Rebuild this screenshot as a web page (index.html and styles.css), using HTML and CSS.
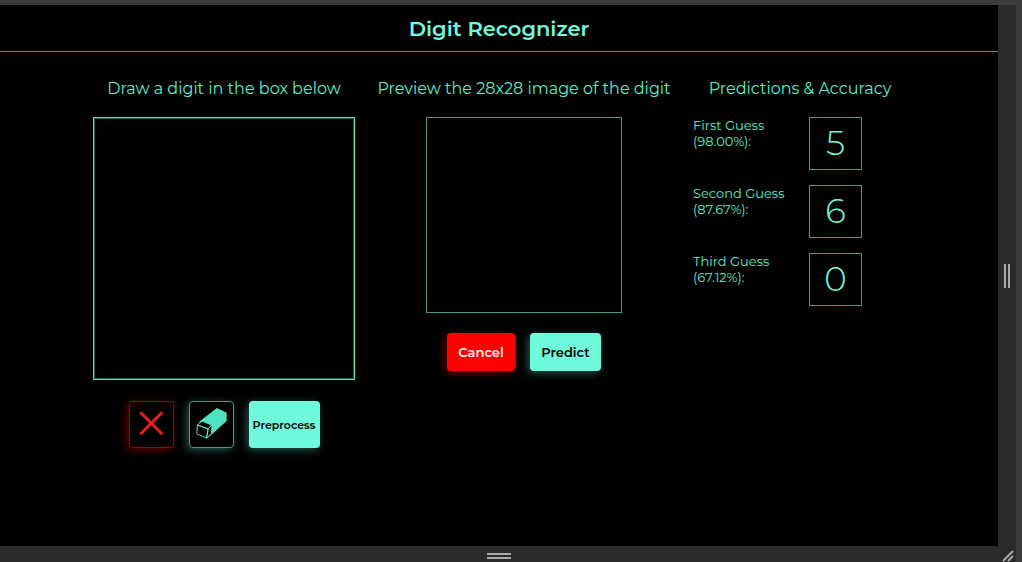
FILE: index.html
```html
<!DOCTYPE html>
<html lang="en">
<head>
<meta charset="utf-8">
<meta name="viewport" content="width=device-width, initial-scale=1">
<title>Digit Recognizer</title>
<link rel="stylesheet" href="styles.css">
</head>
<body>
<div class="frame">
  <div class="page">
    <header class="header"><h1 class="title">Digit Recognizer</h1></header>
    <main class="columns">
      <section class="column">
        <h2 class="heading">Draw a digit in the box below</h2>
        <canvas class="draw-box" width="260" height="261" aria-label="Drawing area"></canvas>
        <div class="actions draw-actions">
          <button class="button icon-button clear" type="button" aria-label="Clear">
            <svg class="icon" viewBox="0 0 44 46" aria-hidden="true"><path d="M10.500 10.500 33 33M33 10.500 10.500 33" fill="none" stroke="#e81d1d" stroke-width="3"/></svg>
          </button>
          <button class="button icon-button erase" type="button" aria-label="Erase">
            <svg class="icon" viewBox="0 0 44 46" aria-hidden="true">
              <path d="M9 20.500 27.500 6 37.500 11V19.500L19 36 22 24Z" fill="#50e3c2"/>
              <path d="M7.500 23.500 12.500 19.500 22 23.500 18.500 27.500ZM7.500 23.500 7 32.500 17 37 18.500 27.500ZM22.500 23.500 22 32.500 17 37 18.500 27.500Z" fill="#000" stroke="#50e3c2" stroke-width="1" stroke-linejoin="round"/>
            </svg>
          </button>
          <button class="button preprocess" type="button">Preprocess</button>
        </div>
      </section>
      <section class="column">
        <h2 class="heading">Preview the 28x28 image of the digit</h2>
        <canvas class="preview-box" width="194" height="194" aria-label="Digit preview"></canvas>
        <div class="actions preview-actions">
          <button class="button cancel" type="button">Cancel</button>
          <button class="button predict" type="button">Predict</button>
        </div>
      </section>
      <section class="column">
        <h2 class="heading">Predictions &amp; Accuracy</h2>
        <div class="guesses">
          <div class="guess"><p class="label">First Guess<br>(98.00%):</p><output class="digit">5</output></div>
          <div class="guess"><p class="label">Second Guess<br>(87.67%):</p><output class="digit">6</output></div>
          <div class="guess"><p class="label">Third Guess<br>(67.12%):</p><output class="digit">0</output></div>
        </div>
      </section>
    </main>
  </div>
  <div class="handle side"><svg width="8" height="24" aria-hidden="true"><path d="M2 0V24M6 0V24" stroke="#aaa" stroke-width="2"/></svg></div>
  <div class="handle bottom"><svg width="24" height="6" aria-hidden="true"><path d="M0 1H24M0 5H24" stroke="#aaa" stroke-width="2"/></svg></div>
  <div class="handle corner"><svg width="12" height="12" aria-hidden="true"><path d="M1 11 11 1M6 11 11 6" stroke="#aaa" stroke-width="2"/></svg></div>
</div>
</body>
</html>
```
FILE: styles.css
```css
* { box-sizing: border-box; }
body {
  margin: 0;
  background: #3c3c3c;
  color: #5cebcb;
  font-family: Montserrat, Inter, sans-serif;
}
.frame {
  min-height: 100vh;
  padding: 5px 6px 0 0;
  display: grid;
  grid-template-columns: minmax(0, 1fr) 18px;
  grid-template-rows: 1fr 16px;
}
.page { background: #000; }
.header {
  padding: 10px 0 9px;
  border-bottom: 1px solid #439b84;
  text-align: center;
}
.title {
  margin: 0;
  color: #70fadc;
  font-size: 21px;
  line-height: 27px;
  font-weight: 600;
}
.columns {
  display: grid;
  grid-template-columns: 262px 286px 214px;
  gap: 26px;
  justify-content: center;
  padding: 26px 0 0 2px;
}
.column {
  display: flex;
  flex-direction: column;
  align-items: center;
}
.heading {
  margin: 0 0 17px;
  font-size: 16px;
  line-height: 22px;
  font-weight: 400;
  white-space: nowrap;
}
.draw-box {
  display: block;
  border: 1px solid #64dcc2;
  box-shadow: inset 0 0 0 1px #24594d;
}
.preview-box {
  display: block;
  border: 1px solid #439b84;
}
.actions {
  display: flex;
  justify-content: center;
}
.draw-actions { gap: 15px; margin-top: 21px; }
.preview-actions { gap: 15px; margin-top: 20px; }
.button {
  height: 38px;
  padding: 0;
  border: 0;
  border-radius: 4px;
  font-family: inherit;
  font-size: 13px;
  font-weight: 600;
  box-shadow: -2px 2px 8px rgba(112, 250, 220, 0.35);
  background: #70fadc;
  color: #000;
}
.icon-button {
  width: 45px;
  height: 47px;
  background: #000;
}
.icon { display: block; width: 100%; height: 100%; }
.clear {
  border: 1px solid #a00000;
  box-shadow: -2px 2px 8px rgba(255, 0, 0, 0.4);
}
.erase { border: 1px solid #439b84; }
.preprocess { width: 71px; height: 47px; font-size: 11px; }
.cancel {
  width: 68px;
  background: #f00;
  color: #fff;
  box-shadow: -2px 2px 8px rgba(255, 0, 0, 0.4);
}
.predict { width: 71px; }
.guesses {
  width: 100%;
  display: flex;
  flex-direction: column;
  gap: 15px;
}
.guess {
  display: grid;
  grid-template-columns: 116px 53px;
}
.label { margin: 0; font-size: 13px; line-height: 16px; }
.digit {
  display: block;
  height: 53px;
  border: 1px solid #439b84;
  color: #70fadc;
  font-size: 34px;
  line-height: 51px;
  font-weight: 300;
  text-align: center;
}
.handle {
  display: flex;
  align-items: center;
  justify-content: center;
  background: #292a2c;
}
.bottom { padding-top: 4px; }
.corner { padding: 4px 0 0 1px; }
```
